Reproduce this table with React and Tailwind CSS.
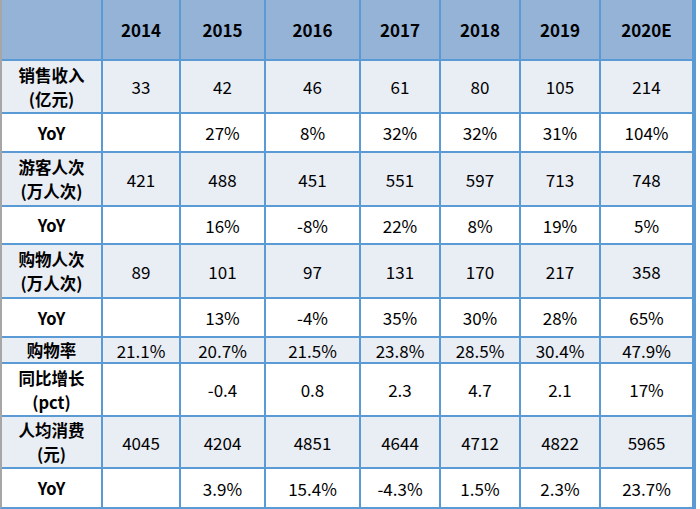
const COLS = ['2014', '2015', '2016', '2017', '2018', '2019', '2020E']

const ROWS = [
  { label: ['销售收入', '(亿元)'], vals: ['33', '42', '46', '61', '80', '105', '214'], shade: true, h: 'h-[51px]' },
  { label: ['YoY'], vals: ['', '27%', '8%', '32%', '32%', '31%', '104%'], h: 'h-[37px]' },
  { label: ['游客人次', '(万人次)'], vals: ['421', '488', '451', '551', '597', '713', '748'], shade: true, h: 'h-[52px]' },
  { label: ['YoY'], vals: ['', '16%', '-8%', '22%', '8%', '19%', '5%'], h: 'h-[36px]' },
  { label: ['购物人次', '(万人次)'], vals: ['89', '101', '97', '131', '170', '217', '358'], shade: true, h: 'h-[52px]' },
  { label: ['YoY'], vals: ['', '13%', '-4%', '35%', '30%', '28%', '65%'], h: 'h-[37px]' },
  { label: ['购物率'], vals: ['21.1%', '20.7%', '21.5%', '23.8%', '28.5%', '30.4%', '47.9%'], shade: true, h: 'h-[24px]' },
  { label: ['同比增长', '(pct)'], vals: ['', '-0.4', '0.8', '2.3', '4.7', '2.1', '17%'], h: 'h-[51px]' },
  { label: ['人均消费', '(元)'], vals: ['4045', '4204', '4851', '4644', '4712', '4822', '5965'], shade: true, h: 'h-[50px]' },
  { label: ['YoY'], vals: ['', '3.9%', '15.4%', '-4.3%', '1.5%', '2.3%', '23.7%'], h: 'h-[38px]' },
]

export default function App() {
  return (
    <div className="w-[700px] h-[509px] bg-white font-['Noto_Sans_CJK_SC','Noto_Sans',sans-serif] text-black">
      <div className="w-[696px] bg-[#5b9bd5] border-l-2 border-l-[#a6a6a6] border-r-2 border-b-2 border-r-[#5b9bd5] border-b-[#5b9bd5]">
        <div className="grid grid-cols-[99px_76px_83px_93px_78px_78px_78px_91px] gap-[2px]">
          <div className="h-[59px] bg-[#95b3d7]" />
          {COLS.map(c => (
            <div key={c} className="h-[59px] bg-[#95b3d7] flex items-center justify-center text-[17px] font-bold">
              {c}
            </div>
          ))}
          {ROWS.map((r, i) => (
            <Row key={i} row={r} />
          ))}
        </div>
      </div>
    </div>
  )
}

function Row({ row }) {
  const bg = row.shade ? 'bg-[#e9edf4]' : 'bg-white'
  return (
    <>
      <div className={`${row.h} ${bg} flex flex-col items-center justify-center text-[16.5px] font-bold leading-[24px]`}>
        {row.label.map(l => <span key={l}>{l}</span>)}
      </div>
      {row.vals.map((v, j) => (
        <div key={j} className={`${row.h} ${bg} flex items-center justify-center text-[17px] leading-none`}>
          {v}
        </div>
      ))}
    </>
  )
}
